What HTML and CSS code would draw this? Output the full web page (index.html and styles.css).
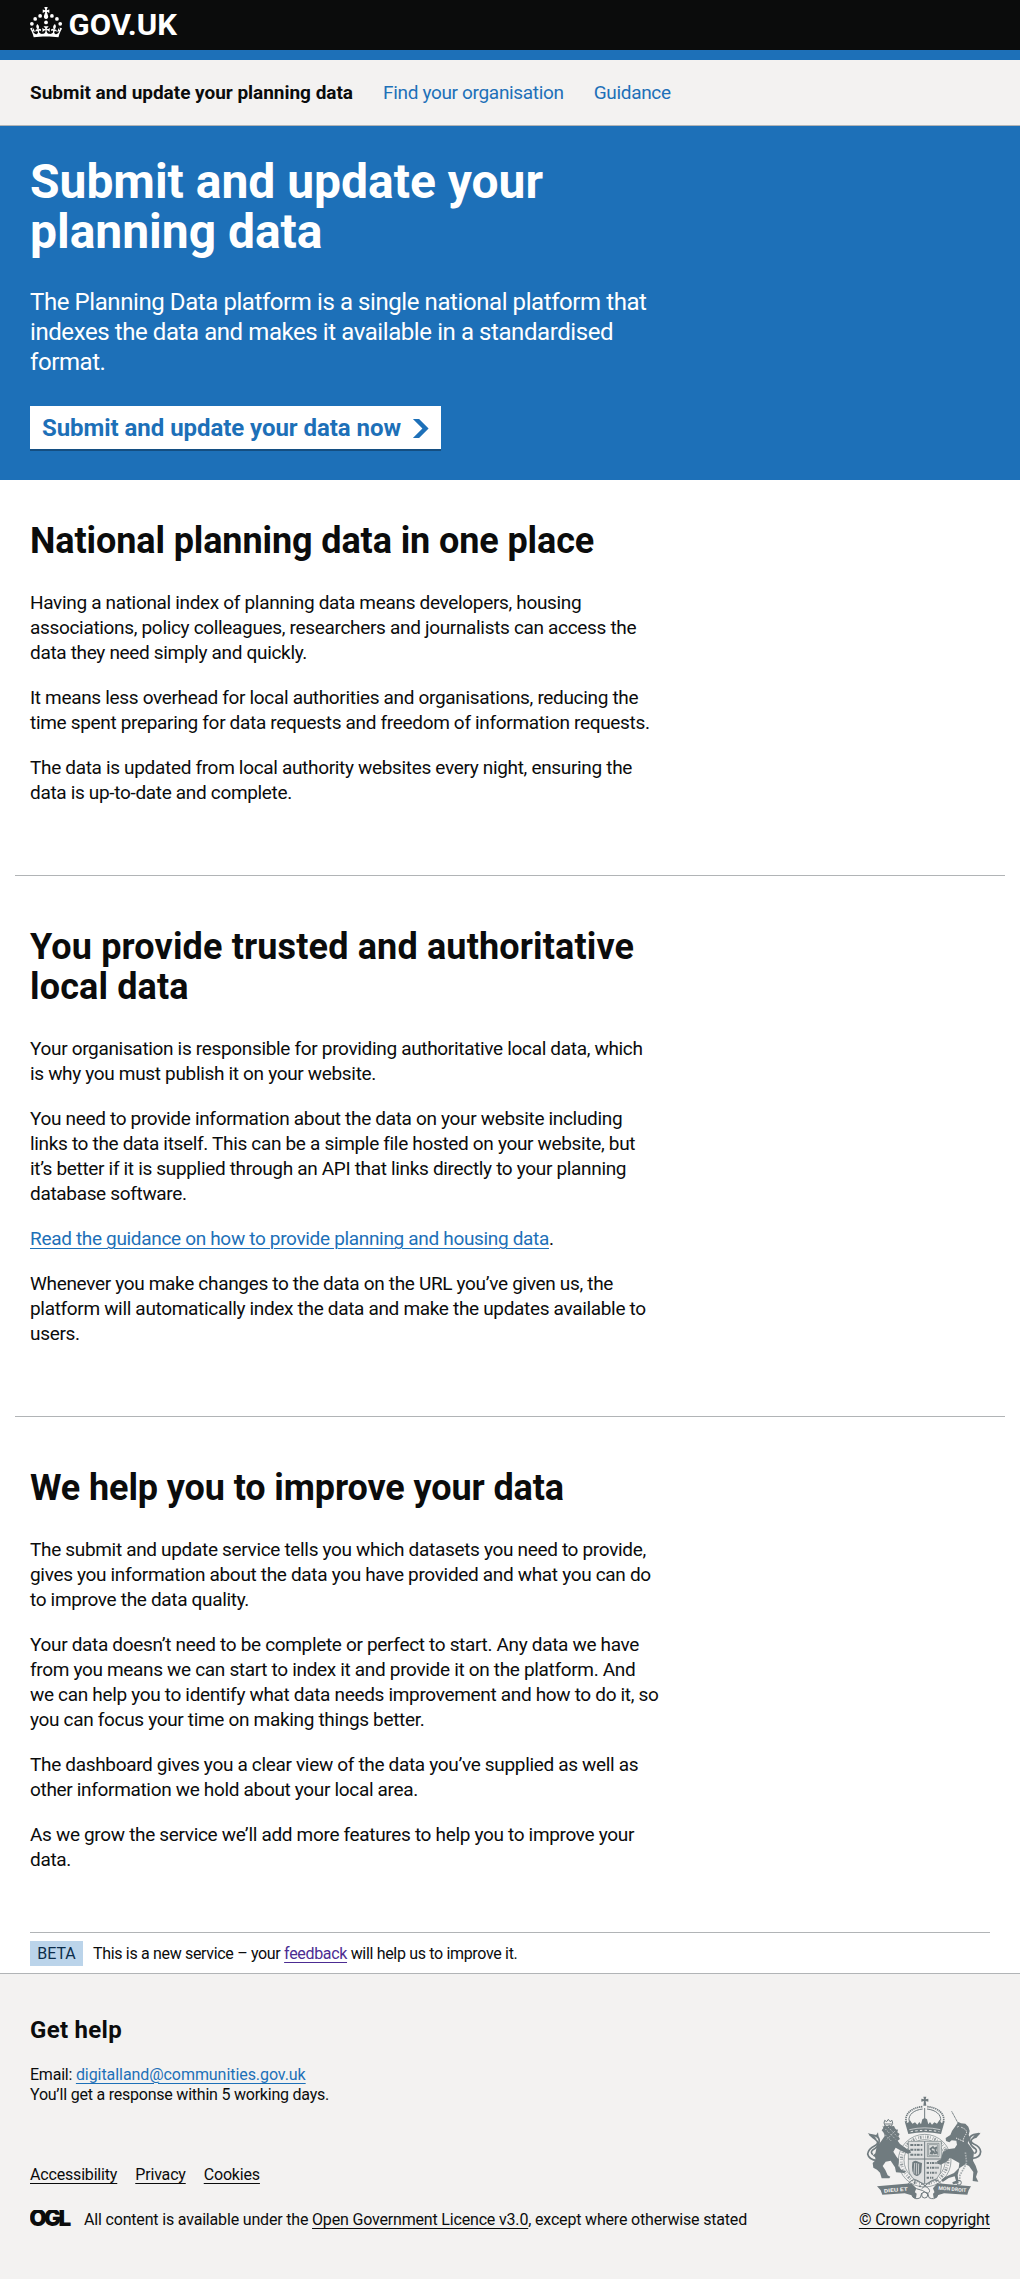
FILE: index.html
```html
<!DOCTYPE html>
<html lang="en">
<head>
<meta charset="utf-8">
<title>Submit and update your planning data</title>
<link rel="stylesheet" href="styles.css">
</head>
<body>
<header class="header">
  <svg class="header-logo" width="160" height="44" viewBox="0 0 160 44" role="img" aria-label="GOV.UK">
    <g transform="translate(0 7) scale(.506)">
      <circle cx="20" cy="17.6" r="3.7"/><circle cx="10.2" cy="23.5" r="3.7"/><circle cx="3.7" cy="33.2" r="3.7"/><circle cx="31.7" cy="30.6" r="3.7"/><circle cx="43.3" cy="17.6" r="3.7"/><circle cx="53.2" cy="23.5" r="3.7"/><circle cx="59.7" cy="33.2" r="3.7"/>
      <path d="M33.1,9.8c.2-.1.3-.3.5-.5l4.6,2.4v-6.8l-4.6,1.5c-.1-.2-.3-.3-.5-.5l1.9-5.9h-6.7l1.9,5.9c-.2.1-.3.3-.5.5l-4.6-1.5v6.8l4.6-2.4c.1.2.3.3.5.5l-2.6,8c-.9,2.8,1.2,5.7,4.1,5.7h0c3,0,5.1-2.9,4.1-5.7l-2.6-8ZM37,37.9s-3.4,3.8-4.1,6.1c2.2,0,4.2-.5,6.4-2.8l-.7,8.5c-2-2.8-4.4-4.1-5.7-3.8.1,3.1.5,6.7,5.8,7.2,3.7.3,6.7-1.5,7-3.8.4-2.6-2-4.3-3.7-1.6-1.4-4.5,2.4-6.1,4.9-3.2-1.9-4.5-1.8-7.7,2.4-10.9,3,4,2.6,7.3-1.2,11.1,2.4-1.3,6.2,0,4,4.6-1.2-2.8-3.7-2.2-4.2.2-.3,1.7.7,3.7,3,4.2,1.9.3,4.7-.9,7-5.9-1.3,0-2.4.7-3.9,1.7l2.4-8c.6,2.3,1.4,3.7,2.2,4.5.6-1.6.5-2.8,0-5.3l5,1.8c-2.6,3.6-5.2,8.7-7.3,17.5-7.4-1.1-15.7-1.7-24.5-1.7h0c-8.8,0-17.1.6-24.5,1.7-2.1-8.9-4.7-13.9-7.3-17.5l5-1.8c-.5,2.5-.6,3.7,0,5.3.8-.8,1.6-2.3,2.2-4.5l2.4,8c-1.5-1-2.6-1.7-3.9-1.7,2.3,5,5.2,6.2,7,5.9,2.3-.4,3.3-2.4,3-4.2-.5-2.4-3-3.1-4.2-.2-2.2-4.6,1.6-6,4-4.6-3.7-3.7-4.2-7.1-1.2-11.1,4.2,3.2,4.3,6.4,2.4,10.9,2.5-2.8,6.3-1.3,4.9,3.2-1.8-2.7-4.1-1-3.7,1.6.3,2.3,3.3,4.1,7,3.8,5.4-.5,5.7-4.2,5.8-7.2-1.3-.2-3.7,1-5.7,3.8l-.7-8.5c2.2,2.3,4.2,2.7,6.4,2.8-.7-2.3-4.1-6.1-4.1-6.1h10.6Z"/>
    </g>
    <text class="header-name" x="38.5" y="35" textLength="108.5" lengthAdjust="spacingAndGlyphs">GOV.UK</text>
  </svg>
</header>
<nav class="nav">
  <a class="nav-item nav-item-service" href="#">Submit and update your planning data</a>
  <a class="nav-item" href="#">Find your organisation</a>
  <a class="nav-item" href="#">Guidance</a>
</nav>
<section class="hero">
  <h1 class="hero-title">Submit and update your planning data</h1>
  <p class="hero-lead">The Planning Data platform is a single national platform that indexes the data and makes it available in a standardised format.</p>
  <a class="start-button" href="#">Submit and update your data now
    <svg class="start-icon" width="17.5" height="19" viewBox="0 0 33 40"><path d="M0 0h13l20 20-20 20H0l20-20z"/></svg>
  </a>
</section>
<main class="main">
  <section class="topic">
    <h2 class="topic-title">National planning data in one place</h2>
    <p>Having a national index of planning data means developers, housing associations, policy colleagues, researchers and journalists can access the data they need simply and quickly.</p>
    <p>It means less overhead for local authorities and organisations, reducing the time spent preparing for data requests and freedom of information requests.</p>
    <p>The data is updated from local authority websites every night, ensuring the data is up-to-date and complete.</p>
  </section>
  <section class="topic">
    <h2 class="topic-title topic-title-long">You provide trusted and authoritative local data</h2>
    <p>Your organisation is responsible for providing authoritative local data, which<br>is why you must publish it on your website.</p>
    <p>You need to provide information about the data on your website including links to the data itself. This can be a simple file hosted on your website, but it’s better if it is supplied through an API that links directly to your planning database software.</p>
    <p><a class="link" href="#">Read the guidance on how to provide planning and housing data</a>.</p>
    <p>Whenever you make changes to the data on the URL you’ve given us, the platform will automatically index the data and make the updates available to users.</p>
  </section>
  <section class="topic topic-last">
    <h2 class="topic-title">We help you to improve your data</h2>
    <p>The submit and update service tells you which datasets you need to provide, gives you information about the data you have provided and what you can do to improve the data quality.</p>
    <p>Your data doesn’t need to be complete or perfect to start. Any data we have from you means we can start to index it and provide it on the platform. And we can help you to identify what data needs improvement and how to do it, so you can focus your time on making things better.</p>
    <p>The dashboard gives you a clear view of the data you’ve supplied as well as other information we hold about your local area.</p>
    <p>As we grow the service we’ll add more features to help you to improve your data.</p>
  </section>
</main>
<div class="phase">
  <strong class="tag">BETA</strong>
  <span class="phase-text">This is a new service – your <a class="link link-visited" href="#">feedback</a> will help us to improve it.</span>
</div>
<footer class="footer">
  <h2 class="footer-title">Get help</h2>
  <p class="footer-contact">Email: <a class="link footer-email" href="#">digitalland@communities.gov.uk</a><br>You’ll get a response within 5 working days.</p>
  <div class="footer-meta">
    <div>
      <div class="footer-links">
        <a href="#">Accessibility</a>
        <a href="#">Privacy</a>
        <a href="#">Cookies</a>
      </div>
      <div class="licence">
        <svg class="ogl" width="42" height="20" viewBox="0 0 42 20" role="img" aria-label="OGL"><text x="-.8 14 28.5" y="16.2">OGL</text></svg>
        <span>All content is available under the <a href="#">Open Government Licence v3.0</a>, except where otherwise stated</span>
      </div>
    </div>
    <div class="copyright">
      <svg class="arms" width="126" height="104" viewBox="36 18 378 312" aria-hidden="true">
        <!-- crown -->
        <path class="f" d="M223 20h9l-2 8 8-2v9l-8-2 2 14h-9l2-14-8 2v-9l8 2z"/>
        <path class="s5" stroke-dasharray="4 2" d="M172 96c-7-25 18-44 49-46M283 96c7-25-18-44-49-46"/>
        <path class="s3" d="M180 92c-2-18 14-32 41-35M275 92c2-18-14-32-41-35M227 54v38"/>
        <path class="f" d="M178 132l-11-38 10 5 5-10 8 12 8-4 7 7 6-8 5 7 4-15 7-4 7 4 4 15 5-7 6 8 7-7 8 4 8-12 5 10 10-5-11 38q-49-10-98 0z"/>
        <path class="l2" d="M181 119q46-11 93 0"/>
        <path class="l3" stroke-dasharray="7 7" d="M185 125q42-8 86 0"/>
        <!-- garter and shield -->
        <ellipse class="s2" cx="227" cy="212" rx="79" ry="79"/>
        <ellipse class="s2" cx="227" cy="211" rx="62" ry="62"/>
        <ellipse class="letters" cx="227" cy="211" rx="70" ry="70"/>
        <path class="shield" d="M178 154h99v77q0 40-49 51-50-11-50-51z"/>
        <path class="s3" d="M227 154v127M178 207h99"/>
        <path class="s6" stroke-dasharray="9 3 5 2" d="M184 165h38M184 179h38M184 194h38"/>
        <path class="s6" stroke-dasharray="7 3 4 2" d="M233 219h37M233 233h36M233 248h32M233 263h20"/>
        <path class="s2" d="M235 160h35v40h-35zM239 164h27v32h-27z"/>
        <path class="s5" d="M244 192l5-9-5-6 8-6 4 5 6-4-3 10 5 7-8 1-3-6-5 9"/>
        <path class="f" d="M190 217q8-9 21 0l8 2-2 28q-10 16-19 9-12-6-8-39z"/>
        <path class="l2" d="M197 219l-2 32M203 219l-1 35M209 221l-1 32"/>
        <!-- lion -->
        <path class="s3" d="M105 99l2-8 6 4 5-7 5 7 6-4 2 9-4 9h-18zM107 102h22"/>
        <path class="f" d="M101 111l8-5 5 3 7-4 6 4 8-1 4 8 8 3-2 8 7 5-4 7 5 8-7 5 7 10 22 16 8 2 3 8-10 3-18-8-18-10-7 12 10 16 7 8-3 18 10 12 14 5-5 5-25-2-3-15-13-20-15 3-9 13 8 12 7 16 8 4-3 5H98l-5-17-9-9-11-6-2-14 9-9-2-9-7-4 8-7 4-19 14-18 10-15-3-10-6-7 5-7-3-8z"/>
        <path class="l2" stroke-dasharray="3 4" d="M109 117l31 31M118 112l26 27M105 131l24 24M143 118l-30 31"/>
        <path class="s5" d="M84 211q-24-1-28-19 2-15 20-24 18-9 3-20l-17-14 16 3q16 5 12 22-5 14-19 21-8 8 1 14"/>
        <path class="f" d="M56 129l18 7 9 11-12-2zM89 142l-2-15-7 10z"/>
        <!-- unicorn -->
        <path class="s3" stroke-dasharray="4 1" d="M308 64l20 37"/>
        <path class="f" d="M328 96l8 4 13 1 9 9 4 13-3 12 5 9-8 15 10 13 9 15-3 25 8 15 6 18-5 16 7 14-17-2 2-27-13-18-11-5-18 12-5 20 3 25-17 3-2-6 11-5-4-13-18 5-18 12-4-7 11-8 27-12 14-14 2-16-28-16-10 12-18 9-8-3-3-7 12-6 5-21 14-9 22-3 7-11-2-12-14-1-7 6-10-4-1-9 14-9 5-12z"/>
        <path class="l3" stroke-dasharray="4 3" d="M337 112q22 8 13 22t-7 21M325 111l5-2M321 144l24 11"/>
        <path class="s5" d="M370 205q24-1 25-20-2-15-19-22-18-9-3-19l17-13-16 3q-16 5-12 22 5 14 17 20 8 8-3 15"/>
        <path class="f" d="M395 128l-18 7-8 11 13-2z"/>
        <path class="chain" d="M349 187l4 31-9 18-11 19-2 20"/>
        <circle class="s3" cx="330" cy="278" r="7"/>
        <!-- motto ribbon -->
        <path class="f" d="M84 289l103-9 15 15q-7 12-4 24l-31-9-67 4-5-13zM366 289l-101-9-13 15q7 12 4 24l29-9 70 4 4-13z"/>
        <path class="s3" d="M178 281q13-20 34-6l27 21q8 12-6 14-9-10-31-14l-20-4zM276 281q-14-20-33-6l-25 21M190 319q9 12 24 4l4-14M264 319q-9 12-24 4l-4-14"/>
        <path class="f" d="M187 311q8-8 16 0l-2 13q-13 2-14-13zM252 311q8-8 16 0-1 15-14 13z"/>
        <circle class="f" cx="197" cy="279" r="3"/><circle class="f" cx="213" cy="289" r="3"/><circle class="s3" cx="227" cy="315" r="9"/>
        <text class="motto" x="105" y="308" transform="rotate(-5 105 308)" textLength="72" lengthAdjust="spacingAndGlyphs">DIEU ET</text>
        <text class="motto" x="268" y="299" transform="rotate(5 268 299)" textLength="84" lengthAdjust="spacingAndGlyphs">MON DROIT</text>
      </svg>
      <a href="#">© Crown copyright</a>
    </div>
  </div>
</footer>
</body>
</html>
```
FILE: styles.css
```css
* { box-sizing: border-box; }
body {
  margin: 0;
  background: #fff;
  color: #0b0c0c;
  font: 400 19px/25px Roboto, "Liberation Sans", sans-serif;
  letter-spacing: -0.0172em;
}
h1, h2, p { margin: 0; }
h1, h2 { font-weight: 700; letter-spacing: -0.002em; }
a { color: inherit; text-decoration-thickness: 1px; text-underline-offset: 3px; }

.header { height: 60px; padding: 0 30px; background: #0b0c0c; border-bottom: 10px solid #1d70b8; }
.header-logo { display: block; fill: #fff; }
.header-name { font: 700 29.5px Roboto, sans-serif; letter-spacing: 0; }

.nav { display: flex; gap: 30px; padding: 20px 30px; background: #f3f2f1; border-bottom: 1px solid #b1b4b6; }
.nav-item { color: #1d70b8; text-decoration: none; }
.nav-item-service { color: #0b0c0c; font-weight: 700; letter-spacing: -0.0013em; }

.hero { height: 354px; padding: 31px 30px 29px; background: #1d70b8; color: #fff; }
.hero-title { max-width: 630px; font-size: 48px; line-height: 50px; letter-spacing: -0.0005em; }
.hero-lead { max-width: 630px; margin: 30px 0 29px; font-size: 24px; line-height: 30px; letter-spacing: -0.0175em; }
.start-button {
  display: inline-flex;
  align-items: center;
  gap: 11px;
  width: 411px;
  height: 43px;
  padding: 2px 12px 0;
  background: #fff;
  box-shadow: 0 2px 0 #144e81;
  color: #1d70b8;
  font-size: 24px;
  font-weight: 700;
  letter-spacing: -0.0022em;
  text-decoration: none;
  white-space: nowrap;
}
.start-icon { flex: none; fill: currentColor; }

.main { padding: 0 15px; }
.topic { padding: 51px 15px 70px; border-bottom: 1px solid #b1b4b6; }
.topic:first-child { padding-top: 41px; }
.topic-last { padding-bottom: 60px; border-bottom: 0; }
.topic > * { max-width: 630px; }
.topic p + p { margin-top: 20px; }
.topic-title { margin-bottom: 29px; font-size: 36px; line-height: 40px; letter-spacing: -0.003em; }
.topic-title-long { letter-spacing: 0.004em; }

.link { color: #1d70b8; }
.link-visited { color: #4c2c92; }

.phase {
  display: flex;
  align-items: center;
  gap: 10px;
  height: 41px;
  margin: 0 30px;
  border-top: 1px solid #b1b4b6;
  font-size: 16px;
  line-height: 20px;
  letter-spacing: -0.0205em;
}
.phase-text { padding-top: 2px; }
.tag { width: 53px; padding: 3px 0 2px; background: #bbd4ea; color: #0c2d4a; font-weight: 400; text-align: center; letter-spacing: 0; }

.footer { padding: 41px 30px 49px; background: #f3f2f1; border-top: 1px solid #b1b4b6; font-size: 16px; line-height: 20px; letter-spacing: -0.011em; }
.footer-title { margin-bottom: 20px; font-size: 24px; line-height: 30px; letter-spacing: 0.012em; }
.footer-contact { letter-spacing: -0.014em; }
.footer-email { letter-spacing: -0.004em; }
.footer-meta { display: flex; justify-content: space-between; align-items: flex-end; margin-top: -9px; }
.footer-links { display: flex; gap: 18px; margin-bottom: 25px; }
.licence { display: flex; gap: 12px; }
.ogl { display: block; fill: #0b0c0c; font: 900 22.5px Inter, sans-serif; letter-spacing: 0; }
.copyright { display: flex; flex-direction: column; align-items: center; letter-spacing: -0.005em; }

.arms { display: block; margin-bottom: 10px; color: #707b7f; fill: none; stroke-linejoin: round; }
.arms .f { fill: currentColor; }
.arms .s2, .arms .s3, .arms .s5, .arms .s6, .arms .chain { stroke: currentColor; stroke-width: 2; }
.arms .s3 { stroke-width: 3; }
.arms .s5 { stroke-width: 5; }
.arms .s6 { stroke-width: 6; }
.arms .l2, .arms .l3 { stroke: #f3f2f1; stroke-width: 2; }
.arms .l3 { stroke-width: 3; }
.arms .letters { stroke: currentColor; stroke-width: 9; stroke-dasharray: 2 3 5 4 2 6; opacity: .75; }
.arms .shield { fill: #dfe0e0; stroke: currentColor; stroke-width: 2; }
.arms .chain { stroke-width: 5; stroke-dasharray: 5 3; stroke: #a4abad; }
.arms .motto { fill: #f3f2f1; font: 700 15px Roboto, sans-serif; letter-spacing: 0; }
```
